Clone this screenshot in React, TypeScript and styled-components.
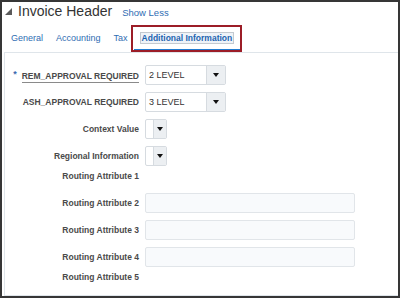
import React from 'react';
import styled, { createGlobalStyle } from 'styled-components';

const GlobalStyle = createGlobalStyle`
  html, body {
    margin: 0;
    padding: 0;
    background: #fff;
  }
  body {
    font-family: 'Liberation Sans', Arial, sans-serif;
  }
`;

const Frame = styled.div`
  width: 400px;
  height: 298px;
  box-sizing: border-box;
  border: 2px solid #363636;
  display: flex;
  flex-direction: column;
  overflow: hidden;
`;

const Header = styled.div`
  height: 18px;
  display: flex;
  align-items: center;
  padding-left: 3px;
`;

const Title = styled.h1`
  margin: 0 10px 0 6px;
  font-size: 14px;
  font-weight: normal;
  line-height: 18px;
  color: #333;
`;

const ShowLess = styled.a`
  font-size: 9.5px;
  color: #2f6db3;
  margin-top: 3px;
  cursor: pointer;
`;

const TabBar = styled.div`
  height: 32px;
  display: flex;
  align-items: flex-end;
  padding-left: 2.5px;
`;

const Tab = styled.div<{ $active?: boolean }>`
  position: relative;
  height: 20px;
  box-sizing: border-box;
  padding: 0 6.5px 5px;
  border-bottom: 3px solid ${(p) => (p.$active ? '#1f7bd1' : 'transparent')};
  font-size: ${(p) => (p.$active ? '8.5px' : '9px')};
  font-weight: ${(p) => (p.$active ? 'bold' : 'normal')};
  line-height: 12px;
  color: #2f6db3;
  white-space: nowrap;
  cursor: pointer;
`;

const FocusLabel = styled.span`
  display: inline-block;
  margin: 0 -1px;
  padding: 0 1px;
  line-height: 10px;
  border: 1px solid #c3c9cf;
  background: #eef3f8;
  color: #1d63b0;
`;

const Highlight = styled.div`
  position: absolute;
  top: -7px;
  left: -3px;
  right: -2px;
  bottom: -3px;
  border: 2px solid #9c1d27;
  pointer-events: none;
`;

const Panel = styled.div`
  flex: 1;
  margin-left: 2px;
  box-sizing: border-box;
  border: 1px solid #dfe5ea;
  border-right: none;
  padding-top: 12px;
`;

const Form = styled.div`
  display: flex;
  flex-direction: column;
  gap: 7px;
`;

const Row = styled.div<{ $textOnly?: boolean }>`
  display: grid;
  grid-template-columns: 134px auto;
  column-gap: 6px;
  align-items: center;
  height: ${(p) => (p.$textOnly ? '12px' : '20px')};
  margin: ${(p) => (p.$textOnly ? '-3px 0 4px' : '0')};
`;

const Label = styled.div`
  text-align: right;
  font-size: 8.5px;
  font-weight: bold;
  color: #4a4a4a;
  white-space: nowrap;
`;

const Asterisk = styled.span`
  color: #3b6cb0;
  font-size: 9px;
  margin-right: 5px;
  vertical-align: 2px;
`;

const Underlined = styled.span`
  border-bottom: 1px solid #8a8a8a;
  padding-bottom: 1px;
`;

const Select = styled.div<{ $w: number }>`
  display: flex;
  width: ${(p) => p.$w}px;
  height: 100%;
  box-sizing: border-box;
  border: 1px solid #d6dbe0;
  border-radius: 2px;
  background: #fff;
  overflow: hidden;
`;

const SelectValue = styled.div`
  flex: 1;
  padding-left: 3px;
  font-size: 9px;
  line-height: 18px;
  color: #333;
`;

const SelectButton = styled.div<{ $w: number }>`
  width: ${(p) => p.$w}px;
  background: #eceff2;
  border-left: 1px solid #d6dbe0;
  display: flex;
  align-items: center;
  justify-content: center;
`;

const TextInput = styled.div`
  width: 210px;
  height: 100%;
  box-sizing: border-box;
  border: 1px solid #e1e5e9;
  border-radius: 2px;
  background: #f8fafc;
`;

const Caret = () => (
  <svg width="6" height="4" viewBox="0 0 6 4">
    <polygon points="0,0 6,0 3,4" fill="#111" />
  </svg>
);

const Disclosure = () => (
  <svg width="7" height="7" viewBox="0 0 7 7">
    <polygon points="7,0 7,7 0,7" fill="#5a5a5a" />
  </svg>
);

interface IField {
  label: string;
  kind: 'select' | 'small' | 'text' | 'none';
  value?: string;
  required?: boolean;
}

const fields: IField[] = [
  { label: 'REM_APPROVAL REQUIRED', kind: 'select', value: '2 LEVEL', required: true },
  { label: 'ASH_APPROVAL REQUIRED', kind: 'select', value: '3 LEVEL' },
  { label: 'Context Value', kind: 'small' },
  { label: 'Regional Information', kind: 'small' },
  { label: 'Routing Attribute 1', kind: 'none' },
  { label: 'Routing Attribute 2', kind: 'text' },
  { label: 'Routing Attribute 3', kind: 'text' },
  { label: 'Routing Attribute 4', kind: 'text' },
  { label: 'Routing Attribute 5', kind: 'none' },
];

const tabs = ['General', 'Accounting', 'Tax', 'Additional Information'];

const renderControl = (f: IField) => {
  if (f.kind === 'select') {
    return (
      <Select $w={81}>
        <SelectValue>{f.value}</SelectValue>
        <SelectButton $w={18}>
          <Caret />
        </SelectButton>
      </Select>
    );
  }
  if (f.kind === 'small') {
    return (
      <Select $w={22}>
        <SelectValue />
        <SelectButton $w={12}>
          <Caret />
        </SelectButton>
      </Select>
    );
  }
  if (f.kind === 'text') return <TextInput />;
  return <span />;
};

const App = () => {
  const active = 'Additional Information';
  return (
    <>
      <GlobalStyle />
      <Frame>
        <Header>
          <Disclosure />
          <Title>Invoice Header</Title>
          <ShowLess>Show Less</ShowLess>
        </Header>
        <TabBar>
          {tabs.map((t) =>
            t === active ? (
              <Tab key={t} $active>
                <FocusLabel>{t}</FocusLabel>
                <Highlight />
              </Tab>
            ) : (
              <Tab key={t}>{t}</Tab>
            )
          )}
        </TabBar>
        <Panel>
          <Form>
            {fields.map((f) => (
              <Row key={f.label} $textOnly={f.kind === 'none'}>
                <Label>
                  {f.required ? (
                    <>
                      <Asterisk>*</Asterisk>
                      <Underlined>{f.label}</Underlined>
                    </>
                  ) : (
                    f.label
                  )}
                </Label>
                {renderControl(f)}
              </Row>
            ))}
          </Form>
        </Panel>
      </Frame>
    </>
  );
};

export default App;
